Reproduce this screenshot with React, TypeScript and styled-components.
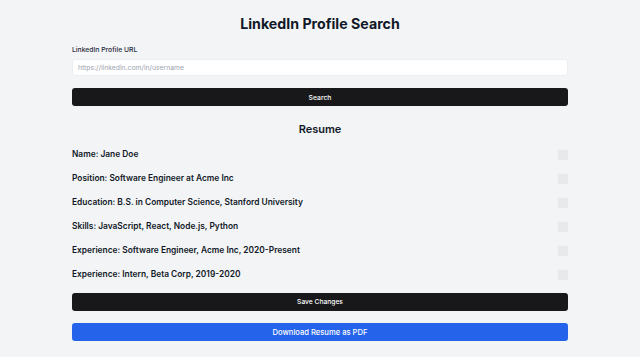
import React from "react";
import styled, { createGlobalStyle } from "styled-components";

const GlobalStyle = createGlobalStyle`
  html, body {
    margin: 0;
    padding: 0;
    background-color: #f3f4f6;
    font-family: Inter, "Noto Sans", sans-serif;
    color: #111827;
  }
`;

const Page = styled.main`
  width: 496px;
  margin: 0 auto;
  padding-top: 14px;
  display: flex;
  flex-direction: column;
`;

const Title = styled.h1`
  margin: 0;
  text-align: center;
  font-size: 14.2px;
  line-height: 20px;
  font-weight: 700;
  color: #111827;
`;

const Label = styled.label`
  margin-top: 11px;
  font-size: 6.8px;
  line-height: 10px;
  font-weight: 500;
  color: #1f2937;
`;

const Input = styled.input`
  margin-top: 4px;
  height: 17px;
  box-sizing: border-box;
  border: 1px solid #eceef1;
  border-radius: 3px;
  background: #ffffff;
  padding: 0 5px;
  font-family: Inter, sans-serif;
  font-size: 6.8px;
  outline: none;
  &::placeholder {
    color: #9ca3af;
  }
`;

const Button = styled.button<{ $variant?: "dark" | "blue"; $size?: number; $top: number }>`
  margin-top: ${(p) => p.$top}px;
  height: 18px;
  border: none;
  border-radius: 3px;
  background-color: ${(p) => (p.$variant === "blue" ? "#2563eb" : "#18181b")};
  color: #ffffff;
  font-family: Inter, sans-serif;
  font-size: ${(p) => p.$size ?? 6.8}px;
  font-weight: 500;
  cursor: pointer;
  padding: 0;
`;

const Heading = styled.h2`
  margin: 15px 0 0;
  text-align: center;
  font-size: 11px;
  line-height: 16px;
  font-weight: 600;
  color: #111827;
`;

const List = styled.ul`
  list-style: none;
  margin: 11px 0 0;
  padding: 0;
  display: flex;
  flex-direction: column;
  gap: 12px;
`;

const Row = styled.li`
  height: 12px;
  display: flex;
  align-items: center;
  justify-content: space-between;
`;

const RowText = styled.span`
  font-size: 8.4px;
  font-weight: 600;
  color: #111827;
`;

const Check = styled.span`
  width: 11px;
  height: 11px;
  border-radius: 2px;
  background-color: #e8e9eb;
  box-shadow: inset 1px 1px 0 #f0f1f3;
`;

const items = [
  "Name: Jane Doe",
  "Position: Software Engineer at Acme Inc",
  "Education: B.S. in Computer Science, Stanford University",
  "Skills: JavaScript, React, Node.js, Python",
  "Experience: Software Engineer, Acme Inc, 2020-Present",
  "Experience: Intern, Beta Corp, 2019-2020",
];

const App = () => {
  return (
    <>
      <GlobalStyle />
      <Page>
        <Title>LinkedIn Profile Search</Title>
        <Label htmlFor="url">LinkedIn Profile URL</Label>
        <Input id="url" placeholder="https://linkedin.com/in/username" />
        <Button $top={12}>Search</Button>
        <Heading>Resume</Heading>
        <List>
          {items.map((item) => (
            <Row key={item}>
              <RowText>{item}</RowText>
              <Check />
            </Row>
          ))}
        </List>
        <Button $top={13} $size={6.7}>
          Save Changes
        </Button>
        <Button $top={12} $variant="blue" $size={7.6}>
          Download Resume as PDF
        </Button>
      </Page>
    </>
  );
};

export default App;
